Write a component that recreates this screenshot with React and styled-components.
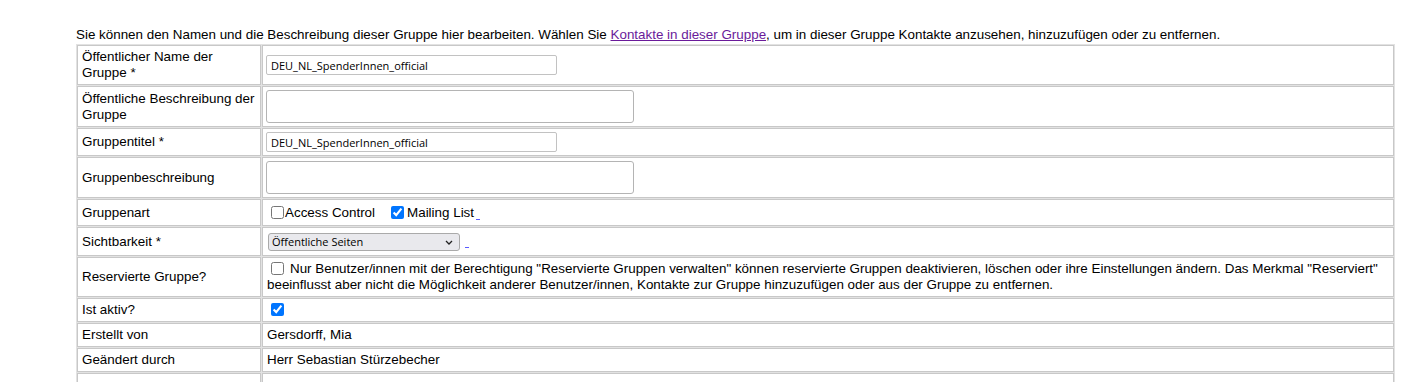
import React from 'react';
import styled, { createGlobalStyle } from 'styled-components';

const GlobalStyle = createGlobalStyle`
  body {
    margin: 0;
    background: #fff;
    color: #000;
    font-family: "Liberation Sans", Arial, sans-serif;
    font-size: 13.4px;
  }
`;

const Page = styled.div`
  padding: 27px 7px 0 76px;
`;

const Intro = styled.div`
  line-height: 16px;
  margin-bottom: 1px;
`;

const Link = styled.a`
  color: #6a1b9a;
  text-decoration: underline;
`;

const FormTable = styled.table`
  width: 100%;
  border-collapse: separate;
  border-spacing: 1px;
  background: #e2e2e2;
`;

const Label = styled.td`
  width: 174px;
  padding: 3px 4px;
  border: 1px solid #c8c8c8;
  background: #fff;
  line-height: 16px;
  vertical-align: middle;
`;

const Value = styled.td`
  padding: ${p => p.$pad ?? 3}px 4px;
  border: 1px solid #c8c8c8;
  background: #fff;
  line-height: 16px;
  vertical-align: middle;
`;

const TextInput = styled.input`
  box-sizing: border-box;
  width: 291px;
  height: 20px;
  margin: 0 0 0 -1px;
  padding: 0 4px;
  border: 1px solid #c2c2c2;
  border-radius: 2px;
  font-family: "Open Sans", "Noto Sans", sans-serif;
  font-size: 11px;
  color: #000;
  vertical-align: middle;
`;

const TextArea = styled.textarea`
  display: block;
  box-sizing: border-box;
  width: 368px;
  height: 33px;
  margin: 0 0 0 -1px;
  border: 1px solid #b4b4b4;
  border-radius: 3px;
  resize: none;
`;

const Check = styled.input`
  width: 13px;
  height: 13px;
  margin: ${p => p.$v ?? 3}px ${p => p.$gap || 2}px ${p => p.$v ?? 3}px 4px;
  vertical-align: -2px;
  accent-color: #0075ff;
`;

const Option = styled.label`
  margin-right: ${p => p.$space || 0}px;
`;

const HelpMark = styled.span`
  display: inline-block;
  width: 4px;
  height: 1px;
  margin-left: ${p => p.$offset || 2}px;
  background: #5a5aff;
  vertical-align: -3px;
`;

const SelectBox = styled.div`
  display: inline-flex;
  align-items: center;
  justify-content: space-between;
  box-sizing: border-box;
  width: 192px;
  height: 18px;
  margin: 2px 0 1px 1px;
  padding: 0 6px 0 3px;
  border: 1px solid #aaa;
  border-radius: 3px;
  background: #e9e9ed;
  font-family: "Open Sans", "Noto Sans", sans-serif;
  font-size: 11px;
  vertical-align: middle;
`;

const Chevron = () => (
  <svg width="8" height="5" viewBox="0 0 8 5">
    <path d="M1 1l3 3 3-3" fill="none" stroke="#222" strokeWidth="1.3" />
  </svg>
);

const rows = [
  ['Öffentlicher Name der Gruppe *', <TextInput defaultValue="DEU_NL_SpenderInnen_official" />],
  ['Öffentliche Beschreibung der Gruppe', <TextArea />],
  ['Gruppentitel *', <TextInput defaultValue="DEU_NL_SpenderInnen_official" />],
  ['Gruppenbeschreibung', <TextArea />],
  [
    'Gruppenart',
    <>
      <Option $space={12}>
        <Check type="checkbox" $gap={1} />
        Access Control
      </Option>
      <Option>
        <Check type="checkbox" defaultChecked $gap={3} />
        Mailing List
      </Option>
      <HelpMark />
    </>,
  ],
  [
    'Sichtbarkeit *',
    <>
      <SelectBox>
        <span>Öffentliche Seiten</span>
        <Chevron />
      </SelectBox>
      <HelpMark $offset={5} />
    </>,
  ],
  [
    'Reservierte Gruppe?',
    <>
      <Check type="checkbox" $gap={6} $v={0} />
      Nur Benutzer/innen mit der Berechtigung "Reservierte Gruppen verwalten" können reservierte Gruppen
      deaktivieren, löschen oder ihre Einstellungen ändern. Das Merkmal "Reserviert" beeinflusst aber nicht
      die Möglichkeit anderer Benutzer/innen, Kontakte zur Gruppe hinzuzufügen oder aus der Gruppe zu entfernen.
    </>,
  ],
  ['Ist aktiv?', <Check type="checkbox" defaultChecked $v={0} />, 2],
  ['Erstellt von', 'Gersdorff, Mia'],
  ['Geändert durch', 'Herr Sebastian Stürzebecher'],
  ['\u00a0', '\u00a0'],
];

const App = () => (
  <Page>
    <GlobalStyle />
    <Intro>
      Sie können den Namen und die Beschreibung dieser Gruppe hier bearbeiten. Wählen Sie{' '}
      <Link href="#">Kontakte in dieser Gruppe</Link>, um in dieser Gruppe Kontakte anzusehen, hinzuzufügen
      oder zu entfernen.
    </Intro>
    <FormTable>
      <tbody>
        {rows.map(([label, value, pad], i) => (
          <tr key={i}>
            <Label>{label}</Label>
            <Value $pad={pad}>{value}</Value>
          </tr>
        ))}
      </tbody>
    </FormTable>
  </Page>
);

export default App;
